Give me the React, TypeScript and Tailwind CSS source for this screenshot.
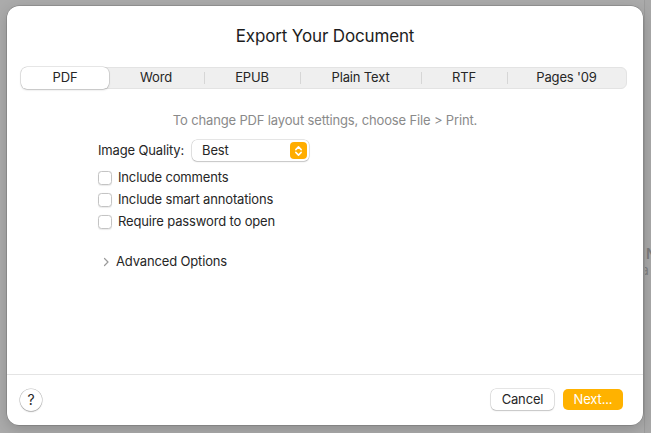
import React from "react";

const tabs = [
  { label: "PDF", w: 86 },
  { label: "Word", w: 96 },
  { label: "EPUB", w: 96 },
  { label: "Plain Text", w: 121 },
  { label: "RTF", w: 86 },
  { label: "Pages '09", w: 119 },
];

function Checkbox({ label }: { label: string }) {
  return (
    <div className="flex items-center h-[22px]">
      <div className="w-[14px] h-[14px] rounded-[3.5px] border border-[#c4c4c4] bg-white shadow-[0_0.5px_1px_rgba(0,0,0,0.08)]" />
      <span className="ml-[6px] text-[13px] tracking-[-0.15px] text-[#262626]">{label}</span>
    </div>
  );
}

export default function App() {
  return (
    <div
      className="relative w-[651px] h-[433px] overflow-hidden bg-[#ababab]"
      style={{ fontFamily: "Inter, 'Noto Sans', 'Liberation Sans', sans-serif" }}
    >
      {/* window behind */}
      <div className="absolute left-[644px] top-0 w-[7px] h-[433px] bg-[#a8a8a8] border-l border-[#9c9c9c] overflow-hidden">
        <span className="absolute left-[1px] top-[246px] text-[14px] leading-[16px] font-semibold text-[#7c7c7c]">N</span>
        <span className="absolute left-[-4px] top-[262px] text-[14px] leading-[16px] text-[#808080]">a</span>
      </div>

      <div className="relative ml-[7px] mt-[6px] w-[636px] h-[419px] rounded-[12px] bg-white shadow-[0_0_0_0.5px_rgba(0,0,0,0.25),0_4px_14px_rgba(0,0,0,0.18)] flex flex-col">
        <div className="pt-[18px] text-center text-[17px] leading-[24px] text-[#1d1d1d] tracking-[-0.15px]">
          Export Your Document
        </div>

        <div className="mt-[19px] ml-[14px] w-[606px] h-[22px] rounded-[6px] bg-[#efefef] border border-[#e3e3e3] flex items-center">
          {tabs.map((t, i) => (
            <div key={t.label} className="relative h-full flex items-center justify-center" style={{ width: t.w }}>
              {i === 0 ? (
                <div className="absolute inset-0 -m-[1px] rounded-[6px] bg-white shadow-[0_0_0_0.5px_rgba(0,0,0,0.18),0_1px_2px_rgba(0,0,0,0.18)]" />
              ) : null}
              {i > 1 ? <div className="absolute left-0 top-[4px] w-px h-[12px] bg-[#d6d6d6]" /> : null}
              <span className="relative text-[13px] tracking-[-0.15px] text-[#262626]">{t.label}</span>
            </div>
          ))}
        </div>

        <div className="mt-[23px] text-center text-[13px] leading-[16px] tracking-[-0.15px] text-[#8a8a8a]">
          To change PDF layout settings, choose File &gt; Print.
        </div>

        <div className="ml-[91px] mt-[12px] flex flex-col">
          <div className="flex items-center h-[21px]">
            <span className="text-[13px] tracking-[-0.15px] text-[#262626]">Image Quality:</span>
            <div className="ml-[8px] w-[117px] h-[21px] rounded-[5px] bg-white shadow-[0_0_0_0.5px_rgba(0,0,0,0.2),0_1px_1.5px_rgba(0,0,0,0.15)] flex items-center justify-between pl-[10px] pr-[2px]">
              <span className="text-[13px] tracking-[-0.15px] text-[#262626]">Best</span>
              <div className="w-[17px] h-[17px] rounded-[4px] bg-[#ffad00] flex items-center justify-center">
                <svg width="9" height="12" viewBox="0 0 9 12" fill="none">
                  <path d="M1.8 4.6 L4.5 1.9 L7.2 4.6" stroke="white" strokeWidth="1.5" strokeLinecap="round" strokeLinejoin="round" />
                  <path d="M1.8 7.4 L4.5 10.1 L7.2 7.4" stroke="white" strokeWidth="1.5" strokeLinecap="round" strokeLinejoin="round" />
                </svg>
              </div>
            </div>
          </div>
          <div className="mt-[6px] flex flex-col">
            <Checkbox label="Include comments" />
            <Checkbox label="Include smart annotations" />
            <Checkbox label="Require password to open" />
          </div>
          <div className="mt-[19px] flex items-center h-[20px]">
            <svg width="10" height="10" viewBox="0 0 10 10" fill="none" className="ml-[3px]">
              <path d="M3.5 1.5 L7 5 L3.5 8.5" stroke="#9a9a9a" strokeWidth="1.2" strokeLinecap="round" strokeLinejoin="round" />
            </svg>
            <span className="ml-[5px] text-[13px] tracking-[-0.15px] text-[#262626]">Advanced Options</span>
          </div>
        </div>

        <div className="mt-auto border-t border-[#e4e4e4] h-[51px] flex items-center px-[13px] pb-[1px]">
          <div className="w-[22px] h-[22px] rounded-full bg-white shadow-[0_0_0_0.5px_rgba(0,0,0,0.25),0_1px_1.5px_rgba(0,0,0,0.2)] flex items-center justify-center text-[14px] text-[#262626]">
            ?
          </div>
          <div className="ml-auto w-[63px] h-[21px] rounded-[5px] bg-white shadow-[0_0_0_0.5px_rgba(0,0,0,0.2),0_1px_1.5px_rgba(0,0,0,0.15)] flex items-center justify-center text-[13px] tracking-[-0.15px] text-[#262626]">
            Cancel
          </div>
          <div className="ml-[9px] mr-[7px] w-[60px] h-[21px] rounded-[5px] bg-[#ffb200] flex items-center justify-center text-[13px] tracking-[-0.15px] text-white">
            Next...
          </div>
        </div>
      </div>
    </div>
  );
}
